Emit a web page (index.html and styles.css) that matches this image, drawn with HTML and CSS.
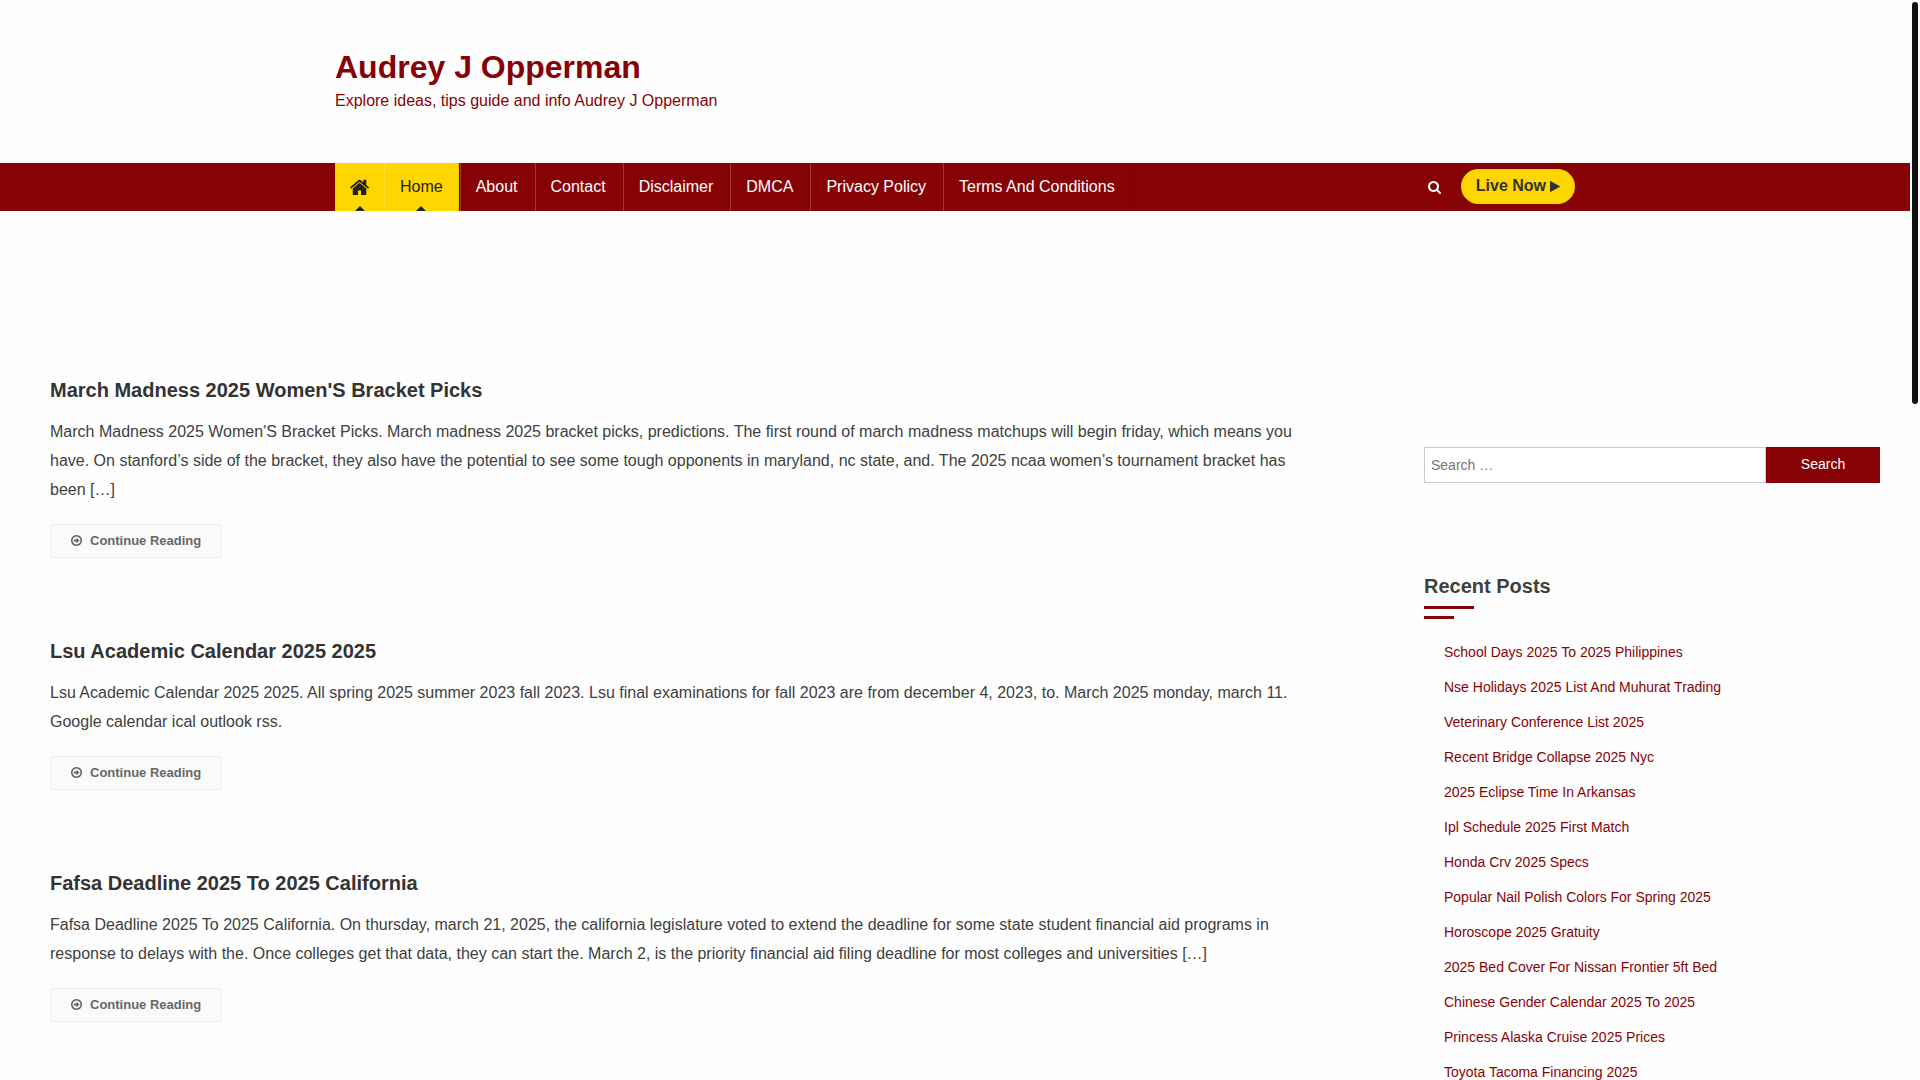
FILE: index.html
```html
<!DOCTYPE html>
<html lang="en">
<head>
  <meta charset="UTF-8">
  <meta name="viewport" content="width=device-width, initial-scale=1.0">
  <title>Audrey J Opperman</title>
  <link rel="stylesheet" href="styles.css">
</head>
<body>
  <svg class="sprite" aria-hidden="true">
    <symbol id="icon-home" viewBox="90 192 1612 1344">
      <path d="M1472 992v480q0 26-19 45t-45 19h-384v-384h-256v384h-384q-26 0-45-19t-19-45v-480q0-1 .5-3t.5-3l575-474 575 474q1 2 1 6zm223-69l-62 74q-8 9-21 11h-3q-13 0-21-7l-692-577-692 577q-12 8-24 7-13-2-21-11l-62-74q-8-10-7-23.5t11-21.5l719-599q32-26 76-26t76 26l244 204v-195q0-14 9-23t23-9h192q14 0 23 9t9 23v408l219 182q10 8 11 21.5t-7 23.5z"/>
    </symbol>
    <symbol id="icon-search" viewBox="64 128 1664 1664">
      <path d="M1216 832q0-185-131.5-316.5t-316.5-131.5-316.5 131.5-131.5 316.5 131.5 316.5 316.5 131.5 316.5-131.5 131.5-316.5zm512 832q0 52-38 90t-90 38q-54 0-90-38l-343-342q-179 124-399 124-143 0-273.5-55.5t-225-150-150-225-55.5-273.5 55.5-273.5 150-225 225-150 273.5-55.5 273.5 55.5 225 150 150 225 55.5 273.5q0 220-124 399l343 343q37 37 37 90z"/>
    </symbol>
    <symbol id="icon-play" viewBox="192 120 1408 1552">
      <path d="M1576 927l-1328 738q-23 13-39.5 3t-16.5-36v-1472q0-26 16.5-36t39.5 3l1328 738q23 13 23 31t-23 31z"/>
    </symbol>
    <symbol id="icon-arrow" viewBox="128 128 1536 1536">
      <path d="M1280 896q0 14-9 23l-320 320q-9 9-23 9-13 0-22.5-9.5t-9.5-22.5v-192h-352q-13 0-22.5-9.5t-9.5-22.5v-192q0-13 9.5-22.5t22.5-9.5h352v-192q0-14 9-23t23-9q12 0 24 10l319 319q9 9 9 23zm160 0q0-148-73-273t-198-198-273-73-273 73-198 198-73 273 73 273 198 198 273 73 273-73 198-198 73-273zm224 0q0 209-103 385.5t-279.5 279.5-385.5 103-385.5-103-279.5-279.5-103-385.5 103-385.5 279.5-279.5 385.5-103 385.5 103 279.5 279.5 103 385.5z"/>
    </symbol>
  </svg>

  <header class="site-header">
    <div class="container">
      <h1 class="site-title"><a href="#">Audrey J Opperman</a></h1>
      <p class="site-description">Explore ideas, tips guide and info Audrey J Opperman</p>
    </div>
  </header>

  <nav class="main-nav">
    <div class="container nav-inner">
      <ul class="menu">
        <li class="home-icon active"><a href="#" aria-label="Front page"><svg class="icon icon-home"><use href="#icon-home"/></svg></a></li>
        <li class="active"><a href="#">Home</a></li>
        <li><a href="#">About</a></li>
        <li><a href="#">Contact</a></li>
        <li><a href="#">Disclaimer</a></li>
        <li><a href="#">DMCA</a></li>
        <li><a href="#">Privacy Policy</a></li>
        <li><a href="#">Terms And Conditions</a></li>
      </ul>
      <div class="nav-tools">
        <button type="button" class="search-toggle" aria-label="Open search"><svg class="icon icon-search"><use href="#icon-search"/></svg></button>
        <a href="#" class="live-link">Live Now<svg class="icon icon-play"><use href="#icon-play"/></svg></a>
      </div>
    </div>
  </nav>

  <div class="site-content">
    <main class="posts">
      <article class="post">
        <h2><a href="#">March Madness 2025 Women'S Bracket Picks</a></h2>
        <p>March Madness 2025 Women'S Bracket Picks. March madness 2025 bracket picks, predictions. The first round of march madness matchups will begin friday, which means you have. On stanford’s side of the bracket, they also have the potential to see some tough opponents in maryland, nc state, and. The 2025 ncaa women’s tournament bracket has been […]</p>
        <a href="#" class="read-more"><svg class="icon icon-arrow"><use href="#icon-arrow"/></svg>Continue Reading</a>
      </article>
      <article class="post">
        <h2><a href="#">Lsu Academic Calendar 2025 2025</a></h2>
        <p>Lsu Academic Calendar 2025 2025. All spring 2025 summer 2023 fall 2023. Lsu final examinations for fall 2023 are from december 4, 2023, to. March 2025 monday, march 11. Google calendar ical outlook rss.</p>
        <a href="#" class="read-more"><svg class="icon icon-arrow"><use href="#icon-arrow"/></svg>Continue Reading</a>
      </article>
      <article class="post">
        <h2><a href="#">Fafsa Deadline 2025 To 2025 California</a></h2>
        <p>Fafsa Deadline 2025 To 2025 California. On thursday, march 21, 2025, the california legislature voted to extend the deadline for some state student financial aid programs in response to delays with the. Once colleges get that data, they can start the. March 2, is the priority financial aid filing deadline for most colleges and universities […]</p>
        <a href="#" class="read-more"><svg class="icon icon-arrow"><use href="#icon-arrow"/></svg>Continue Reading</a>
      </article>
    </main>

    <aside class="sidebar">
      <form class="search-form">
        <input type="search" class="search-field" placeholder="Search …" aria-label="Search for">
        <button type="submit" class="search-submit">Search</button>
      </form>
      <section class="widget">
        <h2 class="widget-title">Recent Posts</h2>
        <ul class="recent-posts">
          <li><a href="#">School Days 2025 To 2025 Philippines</a></li>
          <li><a href="#">Nse Holidays 2025 List And Muhurat Trading</a></li>
          <li><a href="#">Veterinary Conference List 2025</a></li>
          <li><a href="#">Recent Bridge Collapse 2025 Nyc</a></li>
          <li><a href="#">2025 Eclipse Time In Arkansas</a></li>
          <li><a href="#">Ipl Schedule 2025 First Match</a></li>
          <li><a href="#">Honda Crv 2025 Specs</a></li>
          <li><a href="#">Popular Nail Polish Colors For Spring 2025</a></li>
          <li><a href="#">Horoscope 2025 Gratuity</a></li>
          <li><a href="#">2025 Bed Cover For Nissan Frontier 5ft Bed</a></li>
          <li><a href="#">Chinese Gender Calendar 2025 To 2025</a></li>
          <li><a href="#">Princess Alaska Cruise 2025 Prices</a></li>
          <li><a href="#">Toyota Tacoma Financing 2025</a></li>
        </ul>
      </section>
    </aside>
  </div>

  <div class="scroll-rail"><div class="scroll-thumb"></div></div>
</body>
</html>
```
FILE: styles.css
```css
* {
  box-sizing: border-box;
}

html {
  height: 100%;
  overflow: hidden;
}

body {
  margin: 0;
  padding-right: 10px;
  height: 100%;
  overflow: hidden;
  background-color: #fefefe;
  color: #404040;
  font-family: "Liberation Sans", Arial, sans-serif;
  font-size: 16px;
}

h1, h2, p, ul {
  margin: 0;
  padding: 0;
}

ul {
  list-style: none;
}

a {
  color: inherit;
  text-decoration: none;
}

.sprite {
  display: none;
}

.icon {
  display: block;
  fill: currentColor;
}

.container {
  max-width: 1240px;
  margin: 0 auto;
}

/* header */
.site-header {
  padding: 46px 0 49px;
  color: #870205;
}

.site-title {
  font-size: 32px;
  line-height: 42px;
}

.site-description {
  line-height: 26px;
}

/* navigation */
.main-nav {
  background-color: #870205;
  color: #fff;
}

.nav-inner {
  display: flex;
  justify-content: space-between;
  align-items: center;
}

.menu {
  display: flex;
}

.menu li {
  position: relative;
  margin-right: 1px;
  border-left: 1px solid rgba(255, 255, 255, 0.2);
  border-right: 1px solid rgba(0, 0, 0, 0.06);
}

.menu a {
  display: flex;
  align-items: center;
  height: 48px;
  padding: 0 15px;
}

.menu .active {
  background-color: #ffd600;
  color: #222;
}

.menu .home-icon {
  margin-right: 0;
  border-left: 0;
  border-right: 0;
}

.menu .active::after {
  content: "";
  position: absolute;
  left: 50%;
  bottom: 0;
  margin-left: -5px;
  border: 5px solid transparent;
  border-top: 0;
  border-bottom-color: #222;
}

.icon-home {
  width: 19px;
  height: 16px;
}

.nav-tools {
  display: flex;
  align-items: center;
  gap: 20px;
}

.search-toggle {
  padding: 0;
  border: 0;
  background: none;
  color: #fff;
  cursor: pointer;
}

.icon-search {
  width: 13px;
  height: 13px;
}

.live-link {
  display: flex;
  align-items: center;
  gap: 4px;
  height: 35px;
  margin-bottom: 2px;
  padding: 0 15px;
  border-radius: 20px;
  background-color: #ffd600;
  color: #333;
  font-weight: bold;
}

.icon-play {
  width: 10px;
  height: 11px;
}

/* content */
.site-content {
  display: grid;
  grid-template-columns: 1244fr 456fr;
  gap: 130px;
  padding: 164px 30px 0 50px;
}

.posts {
  display: flex;
  flex-direction: column;
  gap: 78px;
}

.post {
  display: flex;
  flex-direction: column;
  align-items: flex-start;
}

.post h2 {
  margin-bottom: 12px;
  color: #333;
  font-size: 20px;
  line-height: 30px;
}

.post p {
  margin-bottom: 20px;
  line-height: 29px;
}

.read-more {
  display: flex;
  align-items: center;
  gap: 8px;
  height: 34px;
  padding: 0 20px 2px;
  border: 1px solid #ececec;
  border-radius: 3px;
  background-color: #fafafa;
  color: #666;
  font-size: 13px;
  font-weight: bold;
}

.icon-arrow {
  width: 11px;
  height: 11px;
}

/* sidebar */
.sidebar {
  padding-top: 72px;
}

.search-form {
  display: flex;
  height: 36px;
  margin-bottom: 88px;
}

.search-field,
.search-submit {
  margin: 0;
  border-radius: 0;
  font-family: inherit;
  font-size: 14px;
}

.search-field {
  width: 75%;
  padding: 0 6px;
  border: 1px solid #ccc;
  background-color: #fff;
  color: #666;
}

.search-submit {
  width: 25%;
  padding: 0 0 2px;
  border: 0;
  background-color: #870205;
  color: #fff;
  cursor: pointer;
}

.widget-title {
  margin-bottom: 21px;
  font-size: 20px;
  line-height: 30px;
}

/* double rule under the widget title */
.widget-title::after {
  content: "";
  display: block;
  width: 50px;
  height: 13px;
  margin-top: 5px;
  background: linear-gradient(#870205, #870205) 0 0 / 50px 3px no-repeat,
    linear-gradient(#870205, #870205) 0 100% / 30px 3px no-repeat;
}

.recent-posts {
  padding-left: 20px;
  color: #870205;
  font-size: 14px;
  line-height: 25px;
}

.recent-posts li {
  margin-bottom: 10px;
}

/* scrollbar */
.scroll-rail {
  position: fixed;
  top: 0;
  right: 0;
  width: 10px;
  height: 100%;
  padding: 2px;
}

.scroll-thumb {
  height: 402px;
  border-radius: 5px;
  background-color: #111;
}
```
